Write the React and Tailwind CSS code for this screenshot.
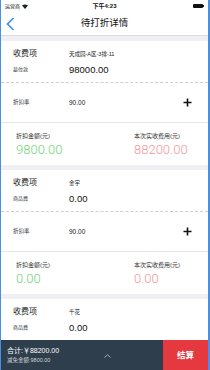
import React from "react";

const F = { fontFamily: '"Liberation Sans","Noto Sans CJK SC",sans-serif' };

function Card({ name, labelB, valueB, discount, disc, real, partial }) {
  return (
    <div className="bg-white">
      <div className={"pt-[5px] pb-[4px] " + (partial ? "" : "border-b border-dashed border-[#cfcfcf]")}>
        <div className="flex h-[16px] items-center pl-[12px]">
          <span className="w-[56px] text-[8px] text-[#222]">收费项</span>
          <span className="text-[5.5px] text-[#222]">{name}</span>
        </div>
        <div className="flex h-[16px] items-center pl-[12px]">
          <span className="w-[56px] text-[5px] text-[#333]">{labelB}</span>
          <span className="text-[9.5px] text-[#111]">{valueB}</span>
        </div>
      </div>
      {!partial && (
        <>
          <div className="flex h-[40px] items-center pl-[12px] pr-[16px] border-b border-[#e6e6e6]">
            <span className="w-[56px] text-[5.5px] text-[#333]">折扣率</span>
            <span className="flex-1 text-[6.5px] text-[#222]">{discount}</span>
            <svg width="9" height="9" viewBox="0 0 9 9">
              <path d="M4.5 0.5v8M0.5 4.5h8" stroke="#111" strokeWidth="1.6" />
            </svg>
          </div>
          <div className="flex justify-between pt-[7px] pb-[8px] pl-[15px] pr-[14px]">
            <div className="flex flex-col">
              <span className="h-[12px] flex items-center text-[6px] text-[#333]">折扣金额(元)</span>
              <span className="h-[15px] flex items-center text-[13px] font-light text-[#72d37c]" style={{ fontFamily: "Roboto, sans-serif" }}>{disc}</span>
            </div>
            <div className="flex flex-col w-[60px]">
              <span className="h-[12px] flex items-center text-[6px] text-[#333]">本次实收费用(元)</span>
              <span className="h-[15px] flex items-center text-[13px] font-light text-[#f4959b]" style={{ fontFamily: "Roboto, sans-serif" }}>{real}</span>
            </div>
          </div>
        </>
      )}
    </div>
  );
}

export default function App() {
  return (
    <div className="w-[210px] h-[370px] flex flex-col bg-[#efeff4] overflow-hidden border-l border-r-2 border-[#4a90e2]" style={F}>
      <div className="bg-white h-[12px] flex items-center justify-between px-[4px] relative">
        <div className="flex items-center gap-[2px]">
          <span className="text-[5px] leading-none text-[#111]">运营商</span>
          <svg width="6" height="5" viewBox="0 0 6 5">
            <path d="M0 1.6 Q3 -0.6 6 1.6 L3 5 Z" fill="#222" />
          </svg>
        </div>
        <span className="absolute left-1/2 -translate-x-1/2 text-[6px] leading-none font-bold text-[#111]">下午4:23</span>
        <div className="flex items-center">
          <div className="w-[10px] h-[4.5px] bg-[#111] rounded-[1px]" />
          <div className="w-[1px] h-[2px] bg-[#111]" />
        </div>
      </div>
      <div className="bg-white h-[24px] flex items-center relative border-b border-[#dcdce0]">
        <svg className="absolute left-[5px]" width="9" height="14" viewBox="0 0 9 14">
          <path d="M7.5 1 L1.5 7 L7.5 13" stroke="#3a8ee6" strokeWidth="1.6" fill="none" />
        </svg>
        <span className="w-full text-center text-[9.5px] text-[#111]">待打折详情</span>
      </div>
      <div className="flex-1 overflow-hidden flex flex-col gap-[5px] pt-[5px]">
        <Card name="天成园-A区-3排-11" labelB="墓位款" valueB="98000.00" discount="90.00" disc="9800.00" real="88200.00" />
        <Card name="金字" labelB="商品费" valueB="0.00" discount="90.00" disc="0.00" real="0.00" />
        <div className="flex-1 bg-white">
          <Card name="千花" labelB="商品费" valueB="0.00" partial />
        </div>
      </div>
      <div className="h-[30px] flex bg-[#2f3e4c]">
        <div className="flex-1 flex items-center relative pl-[6px]">
          <div className="flex flex-col gap-[4px]">
            <span className="text-[7px] leading-none text-white">合计:￥88200.00</span>
            <span className="text-[5.5px] leading-none text-[#d0d4d8]">减免金额:9800.00</span>
          </div>
          <svg className="absolute left-[103px] top-[14px]" width="7" height="4" viewBox="0 0 7 4">
            <path d="M0.5 3.5 L3.5 0.7 L6.5 3.5" stroke="#8fb3cf" strokeWidth="1" fill="none" />
          </svg>
        </div>
        <div className="w-[45px] bg-[#e5393f] flex items-center justify-center text-white text-[8.5px] font-bold">结算</div>
      </div>
    </div>
  );
}
